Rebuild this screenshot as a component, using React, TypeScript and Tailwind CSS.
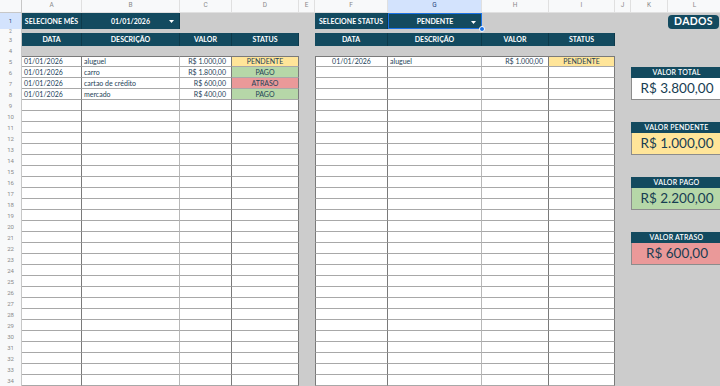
import React from "react";

const entries = [
  { data: "01/01/2026", desc: "aluguel", valor: "R$ 1.000,00", status: "PENDENTE" },
  { data: "01/01/2026", desc: "carro", valor: "R$ 1.800,00", status: "PAGO" },
  { data: "01/01/2026", desc: "cartao de crédito", valor: "R$ 600,00", status: "ATRASO" },
  { data: "01/01/2026", desc: "mercado", valor: "R$ 400,00", status: "PAGO" },
];
const filtered = entries.filter((e) => e.status === "PENDENTE");

const statusBg: Record<string, string> = {
  PENDENTE: "bg-[#ffe599]",
  PAGO: "bg-[#b6d7a8]",
  ATRASO: "bg-[#ea9999]",
};

const cards = [
  { row: 6, title: "VALOR TOTAL", value: "R$ 3.800,00", fill: "bg-white" },
  { row: 11, title: "VALOR PENDENTE", value: "R$ 1.000,00", fill: "bg-[#ffe599]" },
  { row: 16, title: "VALOR PAGO", value: "R$ 2.200,00", fill: "bg-[#b6d7a8]" },
  { row: 21, title: "VALOR ATRASO", value: "R$ 600,00", fill: "bg-[#ea9999]" },
];

const letters = ["A", "B", "C", "D", "E", "F", "G", "H", "I", "J", "K", "L"];

const gray = "bg-[#cccccc]";
const dark = "bg-[#134a5f] text-white font-bold text-[7px] flex items-center justify-center border-r border-[#0d3a4b] whitespace-nowrap overflow-hidden";
const cellText = "text-[7px] text-[#1d4257] whitespace-nowrap overflow-hidden flex items-center";
const lines = "border-b border-b-[#a8a8a8] border-r";
const rDark = "border-r-[#7a7a7a]";
const rLight = "border-r-[#b8b8b8]";

function Arrow() {
  return (
    <svg width="5" height="3" viewBox="0 0 5 3" className="absolute right-[5px] top-[7px]">
      <polygon points="0,0 5,0 2.5,3" fill="#ffffff" />
    </svg>
  );
}

function RowNum({ n, active }: { n: number; active?: boolean }) {
  return (
    <div
      className={`flex items-center justify-center overflow-hidden border-r border-[#c7c7c7] font-['Roboto',sans-serif] text-[6px] leading-none ${
        active ? "bg-[#d3e3fd] text-[#1f3f7a]" : "bg-[#f8f9fa] text-[#8a8a8a]"
      }`}
    >
      {n}
    </div>
  );
}

function BodyRow({ r }: { r: number }) {
  const i = r - 5;
  const e = entries[i];
  const f = filtered[i];
  const top = r === 5 ? "border-t border-t-[#7a7a7a]" : "";
  const card = cards.find((c) => r >= c.row && r <= c.row + 2);

  let right: React.ReactNode = (
    <>
      <div className={gray} />
      <div className={gray} />
    </>
  );
  if (card && r === card.row) {
    right = (
      <div className="col-span-2 bg-[#134a5f] text-white text-[7px] font-semibold flex items-center justify-center tracking-[0.2px]">
        {card.title}
      </div>
    );
  } else if (card && r === card.row + 1) {
    right = (
      <div
        className={`col-span-2 row-span-2 ${card.fill} border-l border-b border-[#8c8c8c] flex items-center justify-center text-[13.5px] text-[#173d52]`}
      >
        {card.value}
      </div>
    );
  } else if (card) {
    right = null;
  }

  return (
    <>
      <RowNum n={r} />
      <div className={`bg-white ${lines} ${rDark} ${top} ${cellText} pl-[2px]`}>{e?.data}</div>
      <div className={`bg-white ${lines} ${rLight} ${top} ${cellText} pl-[2px]`}>{e?.desc}</div>
      <div className={`bg-white ${lines} ${rDark} ${top} ${cellText} justify-end pr-[5px]`}>{e?.valor}</div>
      <div className={`${e ? statusBg[e.status] : "bg-white"} ${lines} ${rDark} ${top} ${cellText} justify-center`}>
        {e?.status}
      </div>
      <div className={gray} />
      <div className={`bg-white ${lines} ${rDark} ${top} border-l border-l-[#7a7a7a] ${cellText} justify-center`}>{f?.data}</div>
      <div className={`bg-white ${lines} ${rLight} ${top} ${cellText} pl-[2px]`}>{f?.desc}</div>
      <div className={`bg-white ${lines} ${rDark} ${top} ${cellText} justify-end pr-[5px]`}>{f?.valor}</div>
      <div className={`${f ? statusBg[f.status] : "bg-white"} ${lines} ${rDark} ${top} ${cellText} justify-center`}>
        {f?.status}
      </div>
      <div className={gray} />
      {right}
    </>
  );
}

export default function App() {
  const bodyRows = Array.from({ length: 30 }, (_, k) => k + 5);

  return (
    <div className="w-[720px] h-[386px] overflow-hidden bg-white font-['Lato',sans-serif]">
      <div className="grid grid-cols-[22px_60px_98px_52px_67px_16px_73px_94px_67px_66px_16px_37px_54px] grid-rows-[13px_16px_4px_13px_10px_repeat(30,11px)] w-[722px]">
        {/* column letters */}
        <div className="bg-[#f8f9fa] border-r border-b border-[#c7c7c7]" />
        {letters.map((l) => (
          <div
            key={l}
            className={`flex items-center justify-center border-r border-b border-[#e0e0e0] font-['Roboto',sans-serif] text-[6.5px] ${
              l === "G" ? "bg-[#d3e3fd] text-[#1f3f7a]" : "bg-[#f8f9fa] text-[#8a8a8a]"
            }`}
          >
            {l}
          </div>
        ))}

        {/* row 1 */}
        <RowNum n={1} active />
        <div className={dark}>SELECIONE MÊS</div>
        <div className={`${dark} relative`}>
          01/01/2026
          <Arrow />
        </div>
        <div className={gray} />
        <div className={gray} />
        <div className={gray} />
        <div className={dark}>SELECIONE STATUS</div>
        <div className={`${dark} relative overflow-visible border border-[#1a73e8]`}>
          PENDENTE
          <Arrow />
          <span className="absolute -right-[4px] -bottom-[4px] w-[6px] h-[6px] rounded-full bg-[#1a73e8] border border-white" />
        </div>
        <div className={gray} />
        <div className={gray} />
        <div className={gray} />
        <div className={gray} />
        <div className={`${gray} flex items-end`}>
          <div className="w-[51px] h-[14px] rounded-[4px] bg-[#134a5f] text-white font-bold text-[10.5px] flex items-center justify-center tracking-[0.3px]">
            DADOS
          </div>
        </div>

        {/* row 2 */}
        <div className="flex justify-center overflow-hidden border-r border-[#c7c7c7] bg-[#f8f9fa] font-['Roboto',sans-serif] text-[5px] leading-[5px] text-[#8a8a8a]">
          2
        </div>
        {letters.map((l) => (
          <div key={"r2" + l} className={gray} />
        ))}

        {/* row 3 */}
        <RowNum n={3} />
        <div className={dark}>DATA</div>
        <div className={dark}>DESCRIÇÃO</div>
        <div className={dark}>VALOR</div>
        <div className={dark}>STATUS</div>
        <div className={gray} />
        <div className={dark}>DATA</div>
        <div className={dark}>DESCRIÇÃO</div>
        <div className={dark}>VALOR</div>
        <div className={dark}>STATUS</div>
        <div className={gray} />
        <div className={gray} />
        <div className={gray} />

        {/* row 4 */}
        <RowNum n={4} />
        {letters.map((l) => (
          <div key={"r4" + l} className={gray} />
        ))}

        {bodyRows.map((r) => (
          <BodyRow key={r} r={r} />
        ))}
      </div>
    </div>
  );
}
